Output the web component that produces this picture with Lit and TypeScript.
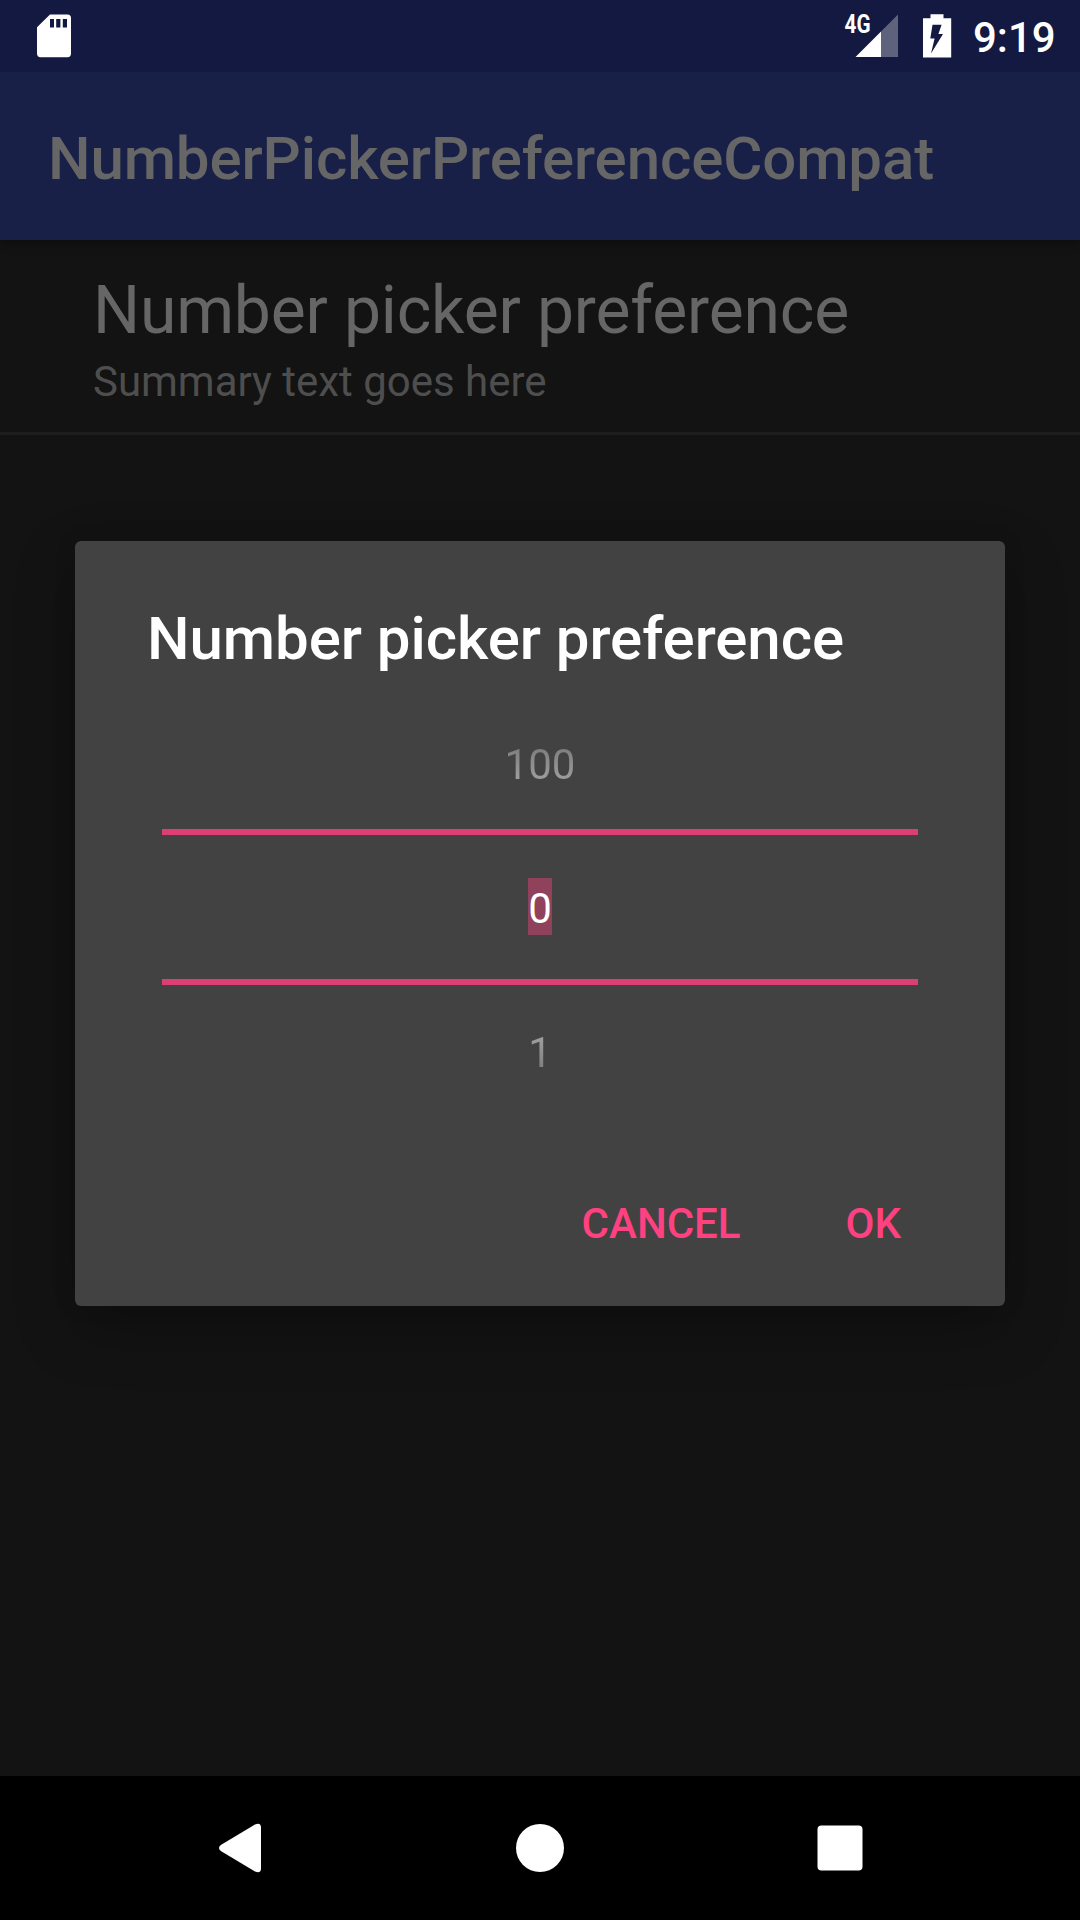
import { LitElement, html, css } from "lit";
import { customElement, property } from "lit/decorators.js";

@customElement("status-bar")
class StatusBar extends LitElement {
  static styles = css`
    :host { position: relative; z-index: 1; display: flex; align-items: flex-start; height: 72px; background: #131940; color: #fff; }
    .sd { margin-left: 37px; flex: none; }
    .spacer { flex: 1; }
    .clock { width: 107px; font-size: 42px; font-weight: 500; line-height: 72px; padding-top: 2px; }
    svg { display: block; flex: none; }
    .net { font: 700 25px Roboto, sans-serif; fill: #fff; }
  `;
  render() {
    return html`
      <svg class="sd" width="36" height="72" viewBox="37 0 36 72">
        <path fill="#fff" fill-rule="evenodd" d="M50 14.5H67.5Q71 14.5 71 18V53.5Q71 57.2 67.5 57.2H40.5Q37 57.2 37 53.5V27.3Z
          M50 19V27.5H54V19Z M56.2 19V27.5H60.4V19Z M62.8 19V27.5H67V19Z"/>
      </svg>
      <div class="spacer"></div>
      <svg width="60" height="72" viewBox="842 0 60 72">
        <path fill="#fff" fill-opacity=".32" d="M881 31.6L898 14.5V57H881Z"/>
        <path fill="#fff" d="M855.5 57L881 31.6V57Z"/>
        <text class="net" x="844.6" y="33.4" textLength="26" lengthAdjust="spacingAndGlyphs">4G</text>
      </svg>
      <svg width="71" height="72" viewBox="902 0 71 72">
        <path fill="#fff" fill-rule="evenodd" d="M930.5 14.3H943.5V18.2H951.2V57.6H923V18.2H930.5Z
          M932.5 24.8L930.3 38.5H934.6L931 53.5L943 34H938.4L941.6 24.8Z"/>
      </svg>
      <div class="clock">9:19</div>
    `;
  }
}

@customElement("preference-row")
class PreferenceRow extends LitElement {
  @property() heading = "";
  @property() summary = "";
  static styles = css`
    :host { display: block; padding: 32px 93px 25px; border-bottom: 3px solid #1e1e1e; }
    .heading { font-size: 66px; line-height: 78px; letter-spacing: -0.17px; color: #666; }
    .summary { margin-top: 7px; font-size: 42px; line-height: 50px; letter-spacing: -0.02px; color: #4e4e4e; }
  `;
  render() {
    return html`<div class="heading">${this.heading}</div><div class="summary">${this.summary}</div>`;
  }
}

@customElement("number-picker")
class NumberPicker extends LitElement {
  @property({ type: Number }) value = 0;
  @property({ type: Number }) max = 100;
  static styles = css`
    :host { display: block; width: 756px; text-align: center; font-size: 42px; color: #fff; }
    .row { display: flex; justify-content: center; align-items: center; box-sizing: border-box; }
    .prev { height: 130px; padding-top: 2px; }
    .next { height: 130px; padding-top: 5px; }
    .current { height: 156px; padding-bottom: 1px; border-top: 6px solid #db3f74; border-bottom: 6px solid #db3f74; }
    .fade { line-height: 50px; color: transparent; background-clip: text; -webkit-background-clip: text; }
    .prev .fade { background-image: linear-gradient(#757575, #a8a8a8); }
    .next .fade { background-image: linear-gradient(#a8a8a8, #757575); }
    .selected { width: 24px; padding-top: 4px; line-height: 53px; background: #90415c; }
  `;
  render() {
    const span = this.max + 1;
    return html`
      <div class="row prev"><span class="fade">${(this.value + span - 1) % span}</span></div>
      <div class="row current"><span class="selected">${this.value}</span></div>
      <div class="row next"><span class="fade">${(this.value + 1) % span}</span></div>
    `;
  }
}

@customElement("navigation-bar")
class NavigationBar extends LitElement {
  static styles = css`
    :host { display: flex; justify-content: center; gap: 156px; height: 144px; background: #000; }
    svg { display: block; flex: none; width: 144px; height: 144px; fill: #fff; }
  `;
  render() {
    return html`
      <svg viewBox="0 0 144 144"><path d="M52.8 69L87 48.4Q93 46 93 51.5V92.5Q93 98 87 95.6L52.8 75Q49.2 72 52.8 69Z"/></svg>
      <svg viewBox="0 0 144 144"><circle cx="72" cy="72" r="24"/></svg>
      <svg viewBox="0 0 144 144"><rect x="49.5" y="49.5" width="45" height="45" rx="4"/></svg>
    `;
  }
}

@customElement("app-root")
class AppRoot extends LitElement {
  static styles = css`
    :host { display: block; font-family: Roboto, sans-serif; }
    .screen { position: relative; display: flex; flex-direction: column; width: 1080px; height: 1920px; overflow: hidden; background: #131313; }
    .toolbar { height: 168px; padding: 5px 48px 0; box-sizing: border-box; background: #192048; color: #666; font-size: 60px; font-weight: 500; line-height: 163px; letter-spacing: -0.11px; box-shadow: 0 3px 10px rgba(0, 0, 0, .35); }
    .content { flex: 1; }
    .overlay { position: absolute; inset: 72px 0 145px; display: flex; align-items: center; justify-content: center; }
    .dialog { display: flex; flex-direction: column; width: 930px; height: 765px; box-sizing: border-box; border-radius: 6px; background: #424242; box-shadow: 0 22px 60px rgba(0, 0, 0, .26), 0 0 24px rgba(0, 0, 0, .08); }
    .title { padding: 63px 72px 0; color: #fff; font-size: 60px; font-weight: 500; line-height: 70px; letter-spacing: -0.05px; }
    .picker { margin: 25px auto 0; }
    .actions { display: flex; justify-content: flex-end; gap: 105px; margin-top: 84px; padding-right: 104px; color: #ff4081; font-size: 42px; font-weight: 500; line-height: 50px; }
  `;
  render() {
    return html`
      <div class="screen">
        <status-bar></status-bar>
        <div class="toolbar">NumberPickerPreferenceCompat</div>
        <div class="content">
          <preference-row heading="Number picker preference" summary="Summary text goes here"></preference-row>
        </div>
        <navigation-bar></navigation-bar>
        <div class="overlay">
          <div class="dialog">
            <div class="title">Number picker preference</div>
            <number-picker class="picker" .value=${0} .max=${100}></number-picker>
            <div class="actions"><span>CANCEL</span><span>OK</span></div>
          </div>
        </div>
      </div>
    `;
  }
}
